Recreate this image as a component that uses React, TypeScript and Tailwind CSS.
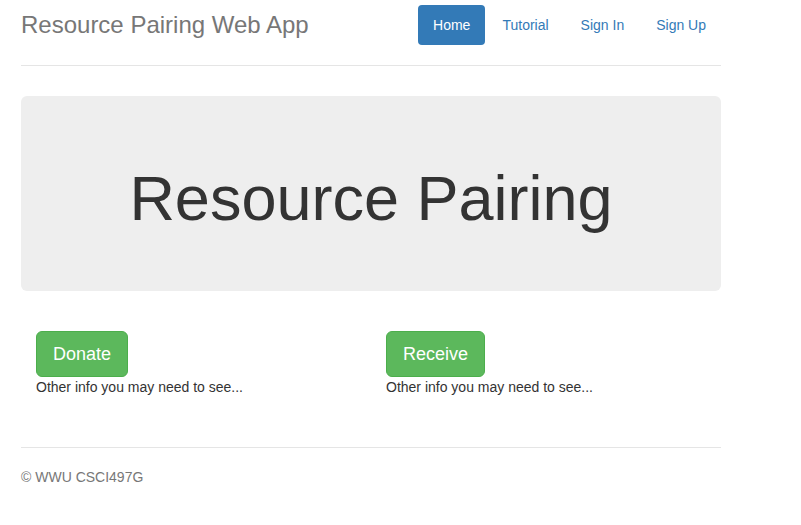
const navItems = [
  { label: "Home", active: true },
  { label: "Tutorial" },
  { label: "Sign In" },
  { label: "Sign Up" },
]

export default function App() {
  return (
    <div className="min-h-screen bg-white pt-[5px] font-['Liberation_Sans',Arial,sans-serif] text-[14px] leading-[20px] text-[#333]">
      <div className="ml-[21px] w-[700px]">
        <header className="flex items-start justify-between border-b border-[#e5e5e5] pb-[20px]">
          <h3 className="m-0 text-[24px] leading-[40px] text-[#777]">Resource Pairing Web App</h3>
          <nav className="flex gap-[2px]">
            {navItems.map((item) => (
              <a
                key={item.label}
                className={
                  item.active
                    ? "block rounded-[4px] bg-[#337ab7] px-[15px] py-[10px] text-white"
                    : "block rounded-[4px] px-[15px] py-[10px] text-[#337ab7]"
                }
                href="#"
              >
                {item.label}
              </a>
            ))}
          </nav>
        </header>

        <div className="mt-[30px] rounded-[6px] bg-[#eee] py-[48px] text-center">
          <h1 className="mt-[20px] mb-[10px] text-[63px] leading-[69px] text-[#333]">Resource Pairing</h1>
        </div>

        <div className="my-[40px] grid grid-cols-[350px_1fr] pl-[15px]">
          {["Donate", "Receive"].map((label) => (
            <div key={label}>
              <button
                className="rounded-[6px] border border-[#4cae4c] bg-[#5cb85c] px-[16px] py-[10px] text-[18px] leading-[24px] text-white"
                type="button"
              >
                {label}
              </button>
              <p className="mb-[10px]">Other info you may need to see...</p>
            </div>
          ))}
        </div>

        <footer className="border-t border-[#e5e5e5] pt-[19px] text-[#777]">
          <p>© WWU CSCI497G</p>
        </footer>
      </div>
    </div>
  )
}
